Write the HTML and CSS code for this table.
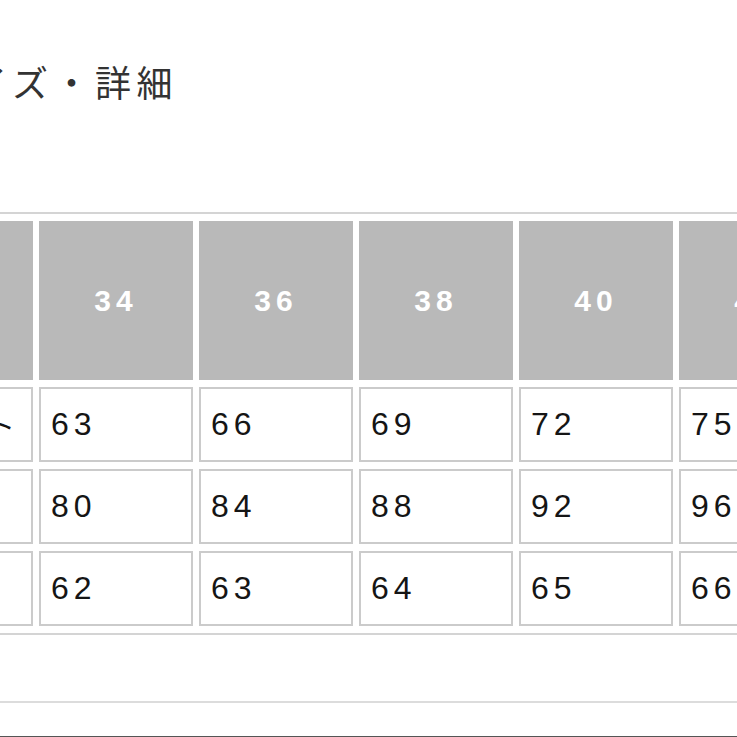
FILE: index.html
```html
<!DOCTYPE html>
<html lang="ja">
<head>
<meta charset="utf-8">
<title>サイズ・詳細</title>
<link rel="stylesheet" href="styles.css">
</head>
<body>
<div class="page">
  <h2 class="title">サイズ・詳細</h2>
  <table class="size-table">
    <thead>
      <tr class="head-row">
        <th></th>
        <th>34</th>
        <th>36</th>
        <th>38</th>
        <th>40</th>
        <th>42</th>
      </tr>
    </thead>
    <tbody>
      <tr class="data-row">
        <td class="label">ウエスト</td>
        <td>63</td>
        <td>66</td>
        <td>69</td>
        <td>72</td>
        <td>75</td>
      </tr>
      <tr class="data-row">
        <td class="label">ヒップ</td>
        <td>80</td>
        <td>84</td>
        <td>88</td>
        <td>92</td>
        <td>96</td>
      </tr>
      <tr class="data-row">
        <td class="label">股下</td>
        <td>62</td>
        <td>63</td>
        <td>64</td>
        <td>65</td>
        <td>66</td>
      </tr>
    </tbody>
  </table>
  <div class="next-section"></div>
</div>
</body>
</html>
```

FILE: styles.css
```css
html, body {
  margin: 0;
  padding: 0;
  background: #ffffff;
}

body {
  width: 737px;
  height: 737px;
  overflow: hidden;
  font-family: "Liberation Sans", "Noto Sans CJK JP", sans-serif;
  color: #1a1a1a;
}

.page {
  width: 737px;
}

.title {
  margin: 63px 0 0 -70px;
  font-family: "Noto Sans CJK JP", sans-serif;
  font-weight: 400;
  font-size: 36px;
  line-height: 36px;
  letter-spacing: 5.5px;
  color: #333333;
  white-space: nowrap;
}

.size-table {
  margin: 113px 0 0 -127px;
  border-collapse: separate;
  border-spacing: 6px 7px;
  table-layout: fixed;
  width: 966px;
  border-top: 2px solid #d4d4d4;
  border-bottom: 2px solid #d4d4d4;
}

.size-table th,
.size-table td {
  box-sizing: border-box;
  width: 154px;
  padding: 0;
  vertical-align: middle;
  white-space: nowrap;
  overflow: hidden;
}

.head-row {
  height: 159px;
}

.size-table th {
  background: #b9b9b9;
  border: 2px solid #b9b9b9;
  color: #ffffff;
  font-weight: 700;
  font-size: 30px;
  letter-spacing: 5px;
  text-align: center;
}

.data-row {
  height: 75px;
}

.size-table td {
  background: #ffffff;
  border: 2px solid #cbcbcb;
  padding-left: 10px;
  font-size: 32px;
  letter-spacing: 5px;
  text-align: left;
  color: #151515;
}

.size-table td.label {
  font-family: "Noto Sans CJK JP", sans-serif;
  font-size: 28px;
  letter-spacing: 4px;
}

.next-section {
  margin-top: 66px;
  height: 33px;
  border-top: 2px solid #dcdcdc;
  border-bottom: 2px solid #555555;
}
```
